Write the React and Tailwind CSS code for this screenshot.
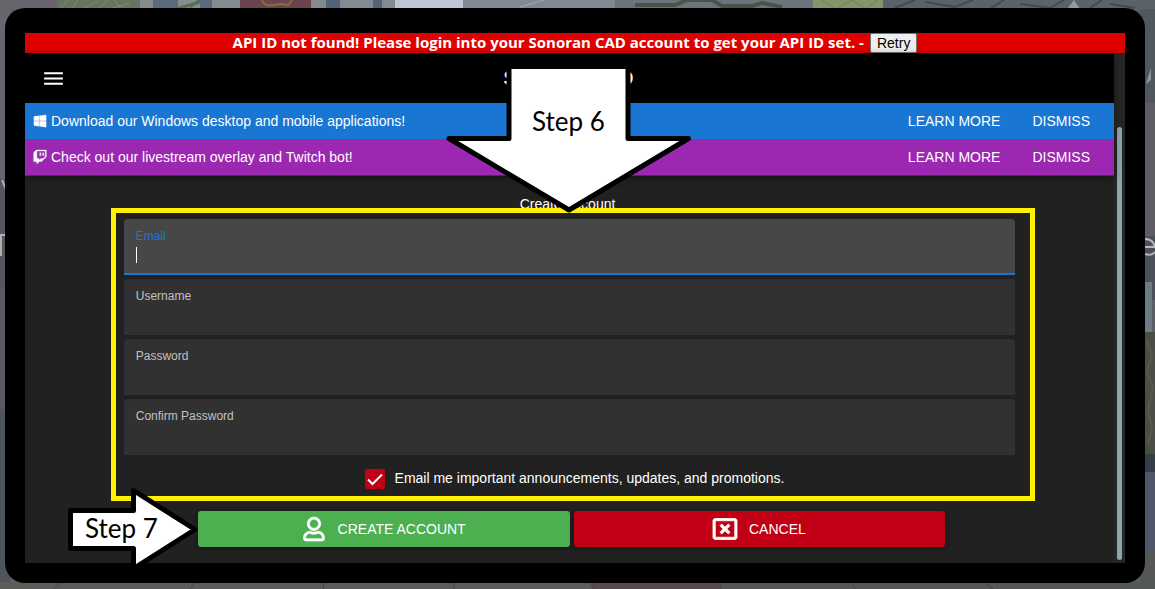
import React from "react";
import { MdMenu } from "react-icons/md";
import { FaWindows, FaTwitch, FaRegUser, FaRegWindowClose } from "react-icons/fa";

const notices = [
  { Icon: FaWindows, text: "Download our Windows desktop and mobile applications!", tone: "bg-[#1976d2]" },
  { Icon: FaTwitch, text: "Check out our livestream overlay and Twitch bot!", tone: "bg-[#9c27b0]" },
];

const fields = [
  { id: "email", label: "Email", type: "email", active: true },
  { id: "username", label: "Username", type: "text" },
  { id: "password", label: "Password", type: "password" },
  { id: "confirm", label: "Confirm Password", type: "password" },
];

function Backdrop() {
  return (
    <svg className="absolute inset-0 h-full w-full" viewBox="0 0 1155 589" preserveAspectRatio="none" aria-hidden="true">
      <rect width="1155" height="589" fill="#5c5f66" />
      <rect width="57" height="9" fill="#68646b" />
      <rect x="57" width="83" height="9" fill="#66755f" />
      <path d="M60 9l8-9M72 9l6-9M84 8l14-7M98 9l10-9M112 8l18-5M122 9l-8-9" stroke="#7a9165" />
      <rect x="140" width="100" height="9" fill="#858b8e" />
      <rect x="153" width="25" height="9" fill="#5b6b7c" />
      <rect x="200" width="12" height="9" fill="#5b6b7c" />
      <path d="M176 9l24-7M190 7l10-7" stroke="#587052" strokeWidth="3" />
      <rect x="240" width="71" height="9" fill="#6b444f" />
      <path d="M262 0q2 7 12 5t12 0t6-5" fill="none" stroke="#82703f" strokeWidth="2" />
      <rect x="311" width="84" height="9" fill="#848a91" />
      <rect x="326" width="14" height="9" fill="#536477" />
      <rect x="373" width="9" height="9" fill="#536477" />
      <rect x="395" width="68" height="9" fill="#bfc6d3" />
      <rect x="463" width="152" height="9" fill="#7f8994" />
      <path d="M520 7l24-7" stroke="#a2aab2" />
      <rect x="615" width="198" height="9" fill="#6c747b" />
      <path d="M635 5h40l12-5h25l10 6h30l10-3 20 4" fill="none" stroke="#4c524b" strokeWidth="4" />
      <rect x="813" width="70" height="9" fill="#83966b" />
      <path d="M822 0l14 9 16-9 14 9 12-9" fill="none" stroke="#6b8351" />
      <rect x="883" width="272" height="9" fill="#5d6268" />
      <path d="M895 8l20-8M925 2l30 5 18-7M990 9l14-9M1020 4l30 4 14-8M1090 8l12-8M1110 4l25 4" fill="none" stroke="#464a50" strokeWidth="2" />
      <path d="M1067 9l7-9 6 9z" fill="#8d9bab" />
      <rect y="9" width="10" height="170" fill="#68666c" />
      <rect y="179" width="10" height="110" fill="#55565e" />
      <rect y="289" width="10" height="120" fill="#5d5960" />
      <rect y="409" width="10" height="180" fill="#4f545c" />
      <path d="M2 180l4 9M0 235h6M1 235v21" stroke="#b1b1b1" strokeWidth="2" />
      <rect x="1140" y="9" width="15" height="94" fill="#4f585f" />
      <path d="M1146 84l5-16v12z" fill="#8998a6" />
      <rect x="1140" y="103" width="15" height="133" fill="#605c63" />
      <rect x="1140" y="236" width="15" height="64" fill="#4c505a" />
      <rect x="1140" y="282" width="12" height="50" fill="#6c7c87" />
      <rect x="1140" y="332" width="15" height="122" fill="#4b4e47" />
      <path d="M1147 340l5 15-5 16 6 18-5 20 4 20-4 15" fill="none" stroke="#5a5943" strokeWidth="2" />
      <rect x="1140" y="454" width="15" height="18" fill="#353d46" />
      <rect x="1140" y="472" width="15" height="80" fill="#50576a" />
      <rect x="1140" y="552" width="15" height="37" fill="#555754" />
      <path d="M1145 239q8 0 10 8h-10M1145 254q7 2 10-2" fill="none" stroke="#b8b8b8" strokeWidth="2" />
      <rect y="582" width="592" height="7" fill="#5c5d59" />
      <rect x="592" y="582" width="130" height="7" fill="#584850" />
      <rect x="722" y="582" width="433" height="7" fill="#555956" />
      <path d="M60 583l-6 6M194 583l-4 6M324 583l-1 6M454 583v6M590 583l4 6M850 583l6 6M985 583l8 6" stroke="#444642" />
    </svg>
  );
}

function Field({ id, label, type, active }) {
  return (
    <div
      className={
        active
          ? "relative flex h-14 flex-col rounded-t border-b-2 border-[#1976d2] bg-[#474747] px-3 pt-2"
          : "relative flex h-14 flex-col rounded-t bg-[#313131] px-3 pt-2"
      }
    >
      <label htmlFor={id} className={active ? "text-xs leading-[18px] text-[#1976d2]" : "text-xs leading-[18px] text-[#c1c1c1]"}>
        {label}
      </label>
      <input id={id} type={type} className="h-5 w-full bg-transparent text-sm text-white caret-transparent outline-none" />
      {active && <span className="absolute left-3 top-7 h-4 w-px bg-white" />}
    </div>
  );
}

export default function App() {
  return (
    <div className="relative min-h-screen overflow-hidden pt-2 pr-[10px] pb-[6px] pl-[5px] font-['Liberation_Sans',Arial,sans-serif] text-sm text-white">
      <Backdrop />
      <div className="relative rounded-[20px] bg-black px-5 pt-[25px] pb-5">
        <div className="flex h-5 items-center justify-center gap-[6px] bg-[#e00000] font-['Open_Sans',sans-serif] text-[15px] leading-[18px] font-bold">
          <span className="pb-[2px]">API ID not found! Please login into your Sonoran CAD account to get your API ID set. -</span>
          <button className="h-5 rounded-xs border border-[#767676] bg-[#efefef] px-[6px] font-['Liberation_Sans',Arial,sans-serif] text-sm leading-[18px] font-normal text-black">
            Retry
          </button>
        </div>

        <div className="flex bg-[#262626]">
          <main className="relative min-w-0 flex-1 bg-[#212121] pb-4">
            <header className="relative border-b border-[#c10015] bg-black shadow-[0_2px_8px_rgba(0,0,0,0.4)]">
              <div className="grid h-[50px] grid-cols-[1fr_auto_1fr] items-center pr-[18px] pl-4">
                <button aria-label="Menu" className="justify-self-start">
                  <MdMenu size={25} />
                </button>
                <h1 className="text-xl font-bold">Sonoran CAD</h1>
              </div>
              {notices.map(({ Icon, text, tone }) => (
                <div key={text} className={`flex h-9 items-center px-2 ${tone}`}>
                  <Icon size={14} stroke="currentColor" strokeWidth={12} className="overflow-visible" />
                  <span className="ml-1 flex-1">{text}</span>
                  <button className="h-9 px-4">LEARN MORE</button>
                  <button className="h-9 px-4">DISMISS</button>
                </div>
              ))}
            </header>

            <form className="mx-auto w-10/12 px-2 pt-[18px]">
              <h2 className="mb-[5px] pr-1 text-center leading-5">Create Account</h2>
              <div className="relative">
                <div className="flex flex-col gap-1">
                  {fields.map((f) => (
                    <Field key={f.id} {...f} />
                  ))}
                </div>
                <label className="mt-1 flex h-10 items-center justify-center gap-[10px] pl-[10px] leading-5">
                  <span className="relative flex size-5">
                    <input type="checkbox" defaultChecked className="peer size-5 appearance-none rounded-xs border-2 border-[#bdbdbd] checked:border-[#c10015] checked:bg-[#c10015]" />
                    <svg className="pointer-events-none absolute inset-0 hidden peer-checked:block" viewBox="0 0 20 20" fill="none" stroke="white" strokeWidth="2">
                      <path d="M3 10.5l4.5 4.5L17 5.5" />
                    </svg>
                  </span>
                  <span className="pb-[2px]">Email me important announcements, updates, and promotions.</span>
                </label>
                <div className="pointer-events-none absolute -top-[11px] -right-5 -bottom-[2px] -left-[13px] border-5 border-[#fff200]" />
              </div>
              <div className="mt-3 flex gap-1 pr-[70px] pl-[74px]">
                <button type="submit" className="flex h-9 flex-1 items-center justify-center gap-3 rounded-[3px] bg-[#4caf50] shadow-[0_1px_4px_rgba(0,0,0,0.4)]">
                  <FaRegUser size={24} stroke="currentColor" strokeWidth={14} className="overflow-visible" />
                  CREATE ACCOUNT
                </button>
                <button type="button" className="flex h-9 flex-1 items-center justify-center gap-3 rounded-[3px] bg-[#c10015] shadow-[0_1px_4px_rgba(0,0,0,0.4)]">
                  <FaRegWindowClose size={24} stroke="currentColor" strokeWidth={18} className="overflow-visible" />
                  CANCEL
                </button>
              </div>
            </form>

            <div className="pointer-events-none absolute top-[10px] left-1/2 flex h-[152px] w-[250px] -translate-x-1/2 justify-center">
              <svg className="absolute inset-0" width="250" height="152" viewBox="0 0 250 152" aria-hidden="true">
                <path d="M64 3.5H183V75.5H243.5L124 147L4 75.5H64Z" fill="white" stroke="black" strokeWidth="5" strokeLinejoin="round" />
              </svg>
              <span className="relative pt-[42px] pr-[2px] font-['Lato',sans-serif] text-[26px] leading-8 text-black">Step 6</span>
            </div>

            <div className="pointer-events-none absolute -bottom-[9px] left-[42px] flex h-[86px] w-[132px] items-center">
              <svg className="absolute inset-0" width="132" height="86" viewBox="0 0 132 86" aria-hidden="true">
                <path d="M3.5 24.5H66.5V4.5L128 43.5L66.5 82.5V62.5H3.5Z" fill="white" stroke="black" strokeWidth="5" strokeLinejoin="round" />
              </svg>
              <span className="relative pb-[2px] pl-[18px] font-['Lato',sans-serif] text-[26px] leading-8 text-black">Step 7</span>
            </div>
          </main>
          <div className="flex w-[11px] flex-col pt-[74px] pr-[3px] pb-[3px] pl-[3px]">
            <div className="flex-1 rounded-sm bg-[#90a4ae]" />
          </div>
        </div>
      </div>
    </div>
  );
}
